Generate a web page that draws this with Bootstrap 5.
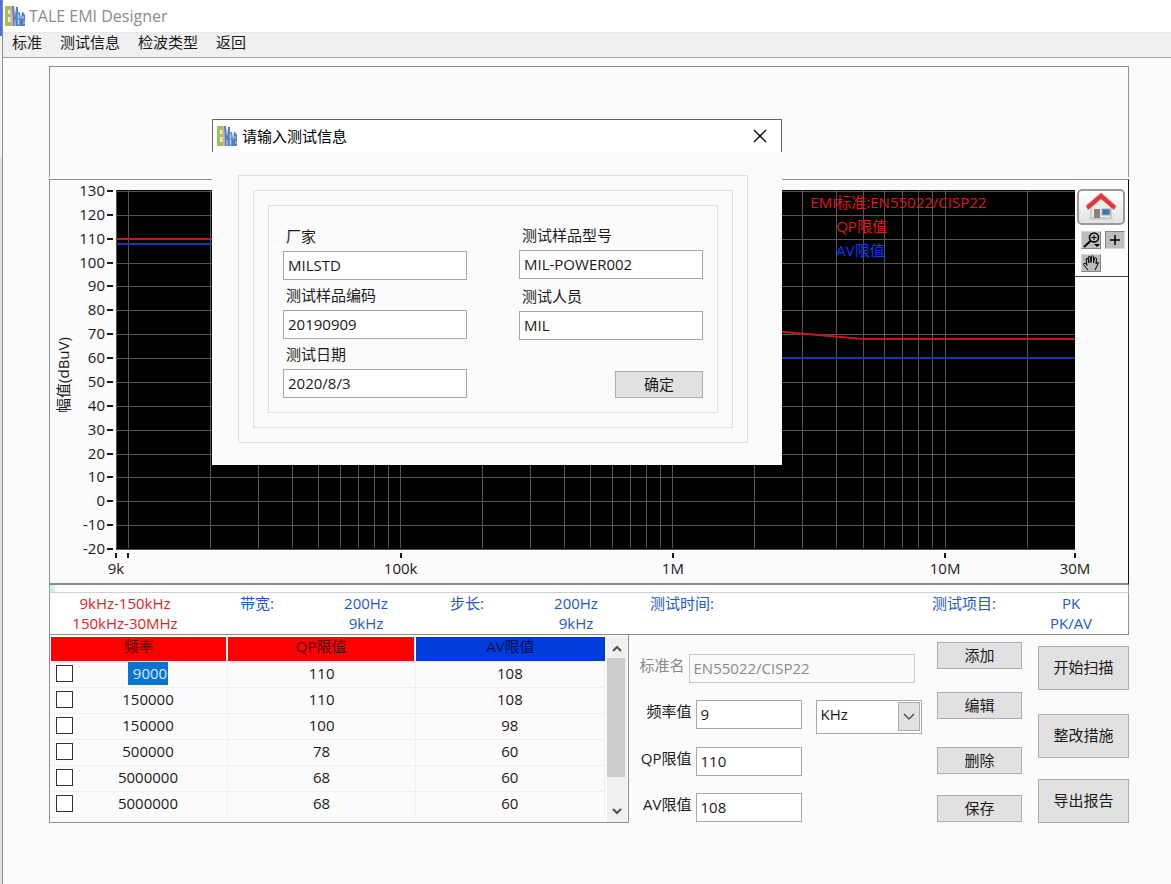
<!DOCTYPE html>
<html lang="zh-CN">
<head>
<meta charset="utf-8">
<meta name="viewport" content="width=device-width, initial-scale=1">
<title>TALE EMI Designer</title>
<link href="https://cdn.jsdelivr.net/npm/bootstrap@5.3.0/dist/css/bootstrap.min.css" rel="stylesheet">
<style>
  body { background: #fbfbfb; color: #1a1a1a; font: 15px/20px "Open Sans", "Noto Sans CJK SC", sans-serif; }
  .behind { width: 3px; flex: none; border-right: 1px solid #8c8c8c; background: linear-gradient(#4a6fe6 36px, #f4f4f4 36px, #f4f4f4 157px, #e2e2e2 157px); }
  .app-side { flex: 1 1 0; min-width: 0; }
  .title-bar { height: 32px; background: #fff; padding-left: 2px; color: #8c8c8c; font-size: 16px; }
  .app-logo { width: 20px; height: 20px; flex: none; }
  .menu-bar { height: 26px; background: #f0f0f0; border-top: 1px solid #e8e8e8; border-bottom: 1px solid #a6a6a6; padding: 0 9px 6px; gap: 18px; }
  .menu-bar a { color: #1a1a1a; text-decoration: none; }
  .workspace { padding: 8px 42px 20px 46px; }
  .top-panel { height: 111px; border: 1px solid #8f8f8f; border-bottom: 0; margin-bottom: 2px; }
  .chart-panel { height: 406px; border: 1px solid #8f8f8f; border-right-color: #111; border-bottom: 2px solid #8a8a8a; }
  .y-axis { width: 66px; height: 400px; flex: none; }
  .plot { height: 359px; margin-top: 10px; background: #000; overflow: visible; min-width: 0; flex: 1 1 0; }
  .axis-text { font-size: 15px; fill: #1a1a1a; }
  .grid-line { stroke: #555; stroke-width: 1; shape-rendering: crispEdges; }
  .tick { stroke: #1a1a1a; stroke-width: 2; shape-rendering: crispEdges; }
  .qp-line { stroke: #c01a1a; stroke-width: 2; }
  .av-line { stroke: #1a38a8; stroke-width: 2; }
  .palette { width: 53px; height: 97px; background: #fdfdfd; border-bottom: 1px solid #444; padding: 9px 3px 0 2px; }
  .home-btn { width: 48px; height: 36px; border: 2px solid #9a9a9a; border-radius: 5px; background: linear-gradient(#fff, #e2e2e2); padding: 0; }
  .tool-grid { display: grid; grid-template-columns: 20px 20px; gap: 5px 4px; padding: 6px 0 0 4px; }
  .tool-btn { width: 20px; height: 18px; border: 1px solid; border-color: #d8d8d8 #858585 #858585 #d8d8d8; background: #bdbdbd; padding: 0; display: flex; align-items: center; justify-content: center; }
  .tool-btn.pressed { border-color: #858585 #d8d8d8 #d8d8d8 #858585; }
  .progress-line { height: 8px; background: linear-gradient(90deg, #c8f4f8 5px, #fff 5px); border: 1px solid #a0a0a0; border-top: 0; border-bottom-color: #d0d0d0; }
  .info-strip { display: grid; grid-template-columns: 150fr 114fr 104fr 98fr 120fr 92fr 186fr 100fr 114fr; background: #fff; border: 1px solid #8f8f8f; border-top: 0; text-align: center; color: #2457cf; height: 42px; white-space: nowrap; }
  .red-text { color: #e01f26; }
  .lower { display: grid; grid-template-columns: 579fr 500fr; }
  .limit-box { border: 1px solid #8f8f8f; border-top: 0; height: 188px; padding: 2px 1px 0; }
  .limit-table { table-layout: fixed; width: 100%; border-collapse: separate; border-spacing: 0; color: #1a1a1a; text-align: center; }
  .limit-table th { height: 25px; padding: 0 0 6px; line-height: 18px; font-weight: 400; background: #f00; border-right: 2px solid #fbfbfb; border-bottom: 1px solid #fbfbfb; color: #4a0000; }
  .limit-table th.av-head { background: #003cdc; color: #001050; border-right: 0; }
  .limit-table td { height: 26px; padding: 0 0 4px; border-right: 1px solid #efefef; border-bottom: 1px solid #efefef; }
  .limit-table td:first-child { padding: 0; }
  .limit-table .freq-col { width: 177px; }
  .freq-cell { display: flex; align-items: center; padding: 0 4px 3px 5px; height: 25px; }
  .freq-cell input { appearance: none; width: 17px; height: 17px; margin: 0; border: 1px solid #333; background: #fff; }
  .freq-cell label { flex: 1; }
  .freq-cell .chosen { display: inline-block; background: #0c73d2; color: #d8ecff; padding: 1px 1px 2px 5px; }
  .scroll-track { width: 20px; margin-left: 2px; flex: none; background: #f0f0f0; }
  .scroll-track button { border: 0; background: none; padding: 0; height: 21px; width: 20px; line-height: 0; }
  .scroll-thumb { background: #cdcdcd; height: 119px; width: 18px; }
  .flat-input { border: 1px solid #a8a8a8; border-radius: 0; height: 29px; padding: 0 4px 2px; color: #1a1a1a; background: #fff; width: 100%; min-width: 0; font-size: 15px; }
  .flat-input:disabled { background: #fafafa; border-color: #c9c9c9; color: #8a8a8a; }
  .flat-btn { border: 1px solid #adadad; border-radius: 0; background: #e1e1e1; color: #1a1a1a; height: 27px; padding: 0 0 2px; font-size: 15px; line-height: 20px; }
  .tall-btn { height: 44px; }
  .form-side { padding-left: 1px; }
  .form-area { display: grid; grid-template-rows: 46px 47px 46px 29px; padding-top: 19px; flex: 1 1 0; min-width: 0; }
  .form-line { display: flex; align-items: start; gap: 4px; }
  .form-line label { width: 62px; text-align: right; flex: none; line-height: 22px; }
  .form-line .off { width: 55px; color: #8a8a8a; }
  .form-line .short { width: 106px; flex: none; }
  .name-input { margin-right: 7px; }
  .unit-box { position: relative; margin-left: 10px; flex: 1 1 0; min-width: 0; }
  .unit-box select { appearance: none; width: 100%; height: 34px; border: 1px solid #a8a8a8; border-radius: 0; background: #fff; padding: 0 4px 6px; color: #1a1a1a; }
  .unit-box .arrow { position: absolute; right: 2px; top: 2px; width: 22px; height: 29px; border: 1px solid #adadad; background: #e1e1e1; pointer-events: none; }
  .small-btns { display: grid; grid-template-rows: 50px 55px 48px 27px; align-items: start; width: 85px; margin-left: 15px; padding-top: 7px; }
  .big-btns { display: grid; grid-template-rows: 68px 65px 44px; align-items: start; width: 91px; margin-left: 16px; padding-top: 11px; }
  .info-dialog { position: absolute; left: 212px; top: 119px; width: 570px; background: #fbfbfb; }
  .dialog-title { height: 33px; background: #fff; border: 1px solid #666; border-bottom: 0; padding: 0 14px 1px 4px; color: #000; gap: 5px; }
  .dialog-title button { border: 0; background: none; padding: 0; line-height: 0; }
  .dialog-body { padding: 23px 34px 22px 26px; }
  .frame { border: 1px solid #e0e0e0; padding: 14px; }
  .field label { display: block; line-height: 20px; padding-left: 3px; margin-bottom: 5px; }
  .field-stack { width: 184px; display: flex; flex-direction: column; padding-top: 6px; gap: 5px; }
  .field-stack.right { padding-top: 5px; gap: 7px; }
  .confirm-btn { width: 88px; margin: 24px 0 0 auto; }
</style>
</head>
<body>
<svg width="0" height="0" class="position-absolute" aria-hidden="true">
  <symbol id="logo" viewBox="0 0 20 20">
    <path d="M0 0h6v20H0z" fill="#a3bf5c"/>
    <path d="M3 4h3v4H3zM3 11h3v5H3z" fill="#e6efcf"/>
    <path d="M5 0h2l1 20H6z" fill="#e3a98c"/>
    <path d="M7 0h2l1 11 1-10h2v19H8z" fill="#4f80c4"/>
    <path d="M12 6h3v14h-3z" fill="#6b98d8"/>
    <path d="M15 6l1 8 1-8h1l2 3v11h-5z" fill="#4f7fc6"/>
    <path d="M10 14v6M13.500 9v3M13.500 14v4M18 10v3M19 15v3" stroke="#c4d8f2" stroke-width="1"/>
  </symbol>
</svg>
<div class="d-flex min-vh-100">
  <div class="behind"></div>
  <div class="app-side">
    <header>
      <div class="title-bar d-flex align-items-center gap-1"><svg class="app-logo"><use href="#logo"/></svg><span>TALE EMI Designer</span></div>
      <nav class="menu-bar d-flex align-items-center">
        <a href="#">标准</a><a href="#">测试信息</a><a href="#">检波类型</a><a href="#">返回</a>
      </nav>
    </header>
    <main class="workspace">
      <div class="top-panel"></div>
      <section class="chart-panel d-flex">
        <svg class="y-axis" id="yAxis">
          <text class="axis-text" transform="translate(19 195) rotate(-90)" text-anchor="middle">幅值(dBuV)</text>
        </svg>
        <svg class="plot" id="plot"></svg>
        <div class="palette">
          <button class="home-btn d-flex align-items-center justify-content-center" aria-label="主页">
            <svg width="34" height="30" viewBox="0 0 34 30">
              <path d="M7 14l10-9 10 9v12H7z" fill="#ececec" stroke="#b0b0b0"/>
              <path d="M2 14L17 1l15 13-2 4-13-11L4 18z" fill="#e0383a"/>
              <path d="M2 14L17 1l15 13" fill="none" stroke="#f27070"/>
              <rect x="10" y="17" width="6" height="9" fill="#8a8078"/>
              <rect x="18" y="17" width="8" height="6" fill="#3f78b0" stroke="#9ab"/>
              <path d="M5 27h24" stroke="#c4c4c4"/>
            </svg>
          </button>
          <div class="tool-grid">
            <button class="tool-btn" aria-label="缩放">
              <svg width="18" height="16" viewBox="0 0 18 16"><circle cx="12" cy="5.500" r="4.500" fill="none" stroke="#000" stroke-width="1.500"/><path d="M9.500 5.500h5M12 3v5" stroke="#000"/><path d="M8.500 9L2 15" stroke="#000" stroke-width="2"/><path d="M12 12h6l-3 3z"/></svg>
            </button>
            <button class="tool-btn pressed" aria-label="光标">
              <svg width="12" height="12" viewBox="0 0 12 12"><path d="M1 6h10M6 1v10" stroke="#000" stroke-width="1.500"/></svg>
            </button>
            <button class="tool-btn" aria-label="平移">
              <svg width="18" height="16" viewBox="0 0 18 16"><path d="M6 15L1.500 9.500q0-2 2-1L5 10.500 4 4q1-2 2 0l1 4-.5-6q1-2 2 0l.5 5.500.5-6q1-1.500 2 0V8l1-5q1.500-1 2 .5L14 9q2-3 2.500-1.500L14 13l-1 2" fill="none" stroke="#000" stroke-width="1"/></svg>
            </button>
          </div>
        </div>
      </section>
      <div class="progress-line"></div>
      <section class="info-strip">
        <div class="red-text">9kHz-150kHz<br>150kHz-30MHz</div>
        <div>带宽:</div><div>200Hz<br>9kHz</div>
        <div>步长:</div><div>200Hz<br>9kHz</div>
        <div>测试时间:</div><div></div>
        <div>测试项目:</div><div>PK<br>PK/AV</div>
      </section>
      <div class="lower">
        <div class="limit-box d-flex">
          <div class="flex-grow-1">
            <table class="limit-table">
              <thead><tr><th class="freq-col">频率</th><th>QP限值</th><th class="av-head">AV限值</th></tr></thead>
              <tbody>
                <tr><td><div class="freq-cell"><input type="checkbox" id="r1"><label for="r1"><span class="chosen">9000</span></label></div></td><td>110</td><td>108</td></tr>
                <tr><td><div class="freq-cell"><input type="checkbox" id="r2"><label for="r2">150000</label></div></td><td>110</td><td>108</td></tr>
                <tr><td><div class="freq-cell"><input type="checkbox" id="r3"><label for="r3">150000</label></div></td><td>100</td><td>98</td></tr>
                <tr><td><div class="freq-cell"><input type="checkbox" id="r4"><label for="r4">500000</label></div></td><td>78</td><td>60</td></tr>
                <tr><td><div class="freq-cell"><input type="checkbox" id="r5"><label for="r5">5000000</label></div></td><td>68</td><td>60</td></tr>
                <tr><td><div class="freq-cell"><input type="checkbox" id="r6"><label for="r6">5000000</label></div></td><td>68</td><td>60</td></tr>
              </tbody>
            </table>
          </div>
          <div class="scroll-track d-flex flex-column">
            <button aria-label="向上"><svg width="12" height="8"><path d="M2 7l4-4 4 4" fill="none" stroke="#505050" stroke-width="2"/></svg></button>
            <div class="scroll-thumb"></div>
            <button class="mt-auto" aria-label="向下"><svg width="12" height="8"><path d="M2 1l4 4 4-4" fill="none" stroke="#505050" stroke-width="2"/></svg></button>
          </div>
        </div>
        <div class="form-side d-flex">
          <form class="form-area">
            <div class="form-line"><label class="off" for="std">标准名</label><input class="flat-input name-input" id="std" value="EN55022/CISP22" disabled></div>
            <div class="form-line"><label for="freq">频率值</label><input class="flat-input short" id="freq" value="9">
              <div class="unit-box"><select aria-label="单位"><option>KHz</option><option>MHz</option></select>
                <span class="arrow d-flex align-items-center justify-content-center"><svg width="12" height="8"><path d="M1 1l5 5 5-5" fill="none" stroke="#555" stroke-width="1.500"/></svg></span></div>
            </div>
            <div class="form-line"><label for="qp">QP限值</label><input class="flat-input short" id="qp" value="110"></div>
            <div class="form-line"><label for="av">AV限值</label><input class="flat-input short" id="av" value="108"></div>
          </form>
          <div class="small-btns">
            <button class="btn flat-btn">添加</button><button class="btn flat-btn">编辑</button><button class="btn flat-btn">删除</button><button class="btn flat-btn">保存</button>
          </div>
          <div class="big-btns">
            <button class="btn flat-btn tall-btn">开始扫描</button><button class="btn flat-btn tall-btn">整改措施</button><button class="btn flat-btn tall-btn">导出报告</button>
          </div>
        </div>
      </div>
    </main>
  </div>
</div>

<div class="info-dialog" role="dialog" aria-labelledby="dlgTitle">
  <div class="dialog-title d-flex align-items-center">
    <svg class="app-logo"><use href="#logo"/></svg>
    <span id="dlgTitle">请输入测试信息</span>
    <button class="ms-auto" aria-label="关闭"><svg width="14" height="14"><path d="M1 1l12 12M13 1L1 13" stroke="#000" stroke-width="1.300"/></svg></button>
  </div>
  <div class="dialog-body">
    <div class="frame"><div class="frame"><div class="frame d-flex justify-content-between">
      <div class="field-stack">
        <div class="field"><label for="maker">厂家</label><input class="flat-input" id="maker" value="MILSTD"></div>
        <div class="field"><label for="code">测试样品编码</label><input class="flat-input" id="code" value="20190909"></div>
        <div class="field"><label for="date">测试日期</label><input class="flat-input" id="date" value="2020/8/3"></div>
      </div>
      <div class="field-stack right">
        <div class="field"><label for="model">测试样品型号</label><input class="flat-input" id="model" value="MIL-POWER002"></div>
        <div class="field"><label for="person">测试人员</label><input class="flat-input" id="person" value="MIL"></div>
        <button class="btn flat-btn confirm-btn">确定</button>
      </div>
    </div></div></div>
  </div>
</div>

<script src="https://cdn.jsdelivr.net/npm/bootstrap@5.3.0/dist/js/bootstrap.bundle.min.js"></script>
<script>
  // Logarithmic frequency axis from 9 kHz to 30 MHz, linear level axis from -20 to 130 dBuV
  const NS = 'http://www.w3.org/2000/svg';
  const plot = document.getElementById('plot'), yAxis = document.getElementById('yAxis');
  const HEIGHT = 358, F0 = 9e3, F1 = 30e6;
  const fx = f => (Math.log10(f / F0) / Math.log10(F1 / F0) * 100).toFixed(3) + '%';
  const ly = v => Math.round((130 - v) / 150 * HEIGHT) + 1;
  function add(parent, tag, attrs, text) {
    const el = document.createElementNS(NS, tag);
    for (const k in attrs) el.setAttribute(k, attrs[k]);
    if (text) el.textContent = text;
    parent.appendChild(el);
  }
  const line = (p, cls, x1, y1, x2, y2) => add(p, 'line', { class: cls, x1, y1, x2, y2 });

  for (let v = 130; v >= -20; v -= 10) {
    line(plot, 'grid-line', '0', ly(v), '100%', ly(v));
    line(yAxis, 'tick', 57, ly(v) + 10, 63, ly(v) + 10);
    add(yAxis, 'text', { class: 'axis-text', x: 55, y: ly(v) + 15, 'text-anchor': 'end' }, String(v));
  }
  line(plot, 'grid-line', '0', 0, '0', HEIGHT);
  for (let d = 1e4; d <= 1e7; d *= 10)
    for (let m = 1; m < 10; m++)
      if (d * m < F1) line(plot, 'grid-line', fx(d * m), 0, fx(d * m), HEIGHT);
  [[9e3, '9k'], [1e4, ''], [1e5, '100k'], [1e6, '1M'], [1e7, '10M'], [3e7, '30M']].forEach(([f, t]) => {
    line(plot, 'tick', fx(f), 363, fx(f), 368);
    if (t) add(plot, 'text', { class: 'axis-text', x: fx(f), y: 384, 'text-anchor': 'middle' }, t);
  });
  const limits = {
    'qp-line': [[9e3, 110], [15e4, 110], [15e4, 100], [5e5, 78], [5e6, 68], [3e7, 68]],
    'av-line': [[9e3, 108], [15e4, 108], [15e4, 98], [5e5, 60], [3e7, 60]]
  };
  for (const cls in limits)
    limits[cls].slice(1).forEach(([f, v], i) => line(plot, cls, fx(limits[cls][i][0]), ly(limits[cls][i][1]), fx(f), ly(v)));
  add(plot, 'text', { x: '72.4%', y: 18, fill: '#e01818' }, 'EMI标准:EN55022/CISP22');
  add(plot, 'text', { x: '75.1%', y: 42, fill: '#e01818' }, 'QP限值');
  add(plot, 'text', { x: '75.1%', y: 66, fill: '#0a3cf0' }, 'AV限值');
</script>
</body>
</html>
